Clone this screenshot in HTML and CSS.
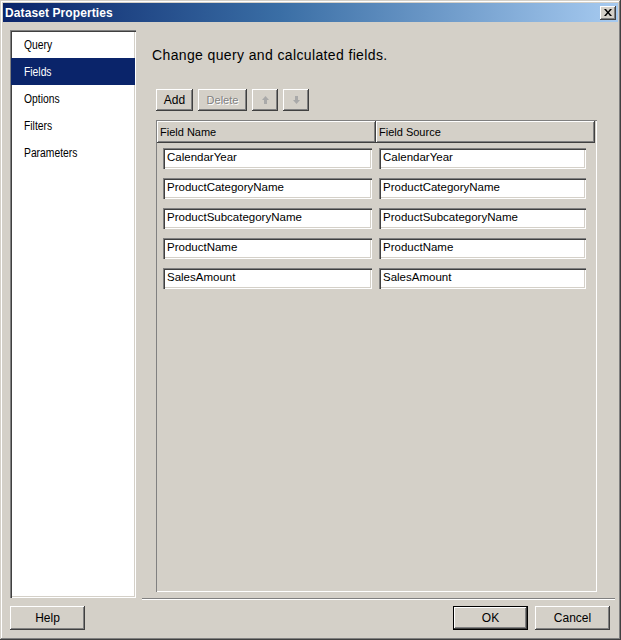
FILE: index.html
```html
<!DOCTYPE html>
<html>
<head>
<meta charset="utf-8">
<title>Dataset Properties</title>
<link rel="stylesheet" href="styles.css">
</head>
<body>
<div class="window">
  <div class="titlebar">
    <span class="title">Dataset Properties</span>
    <span class="close"><svg width="8" height="7" viewBox="0 0 8 7"><path d="M0 0h2l2 2.5L6 0h2L5 3.5 8 7H6L4 4.5 2 7H0l3-3.5z" fill="#000"/></svg></span>
  </div>
  <div class="main">
    <ul class="nav">
      <li><span>Query</span></li>
      <li class="active"><span>Fields</span></li>
      <li><span>Options</span></li>
      <li><span>Filters</span></li>
      <li><span>Parameters</span></li>
    </ul>
    <div class="content">
      <h1 class="heading">Change query and calculated fields.</h1>
      <div class="toolbar">
        <button class="btn btn-add">Add</button>
        <button class="btn btn-delete disabled">Delete</button>
        <button class="btn btn-arrow disabled"><svg width="7" height="8" viewBox="0 0 7 8"><path d="M3.5 0L7 4H5v4H2V4H0z" fill="#a9a9a9"/></svg></button>
        <button class="btn btn-arrow disabled"><svg width="7" height="8" viewBox="0 0 7 8"><path d="M3.5 8L7 4H5V0H2v4H0z" fill="#a9a9a9"/></svg></button>
      </div>
      <div class="grid">
        <div class="grid-head">
          <div class="hcell">Field Name</div>
          <div class="hcell">Field Source</div>
        </div>
        <div class="grid-row"><div class="cell c1"><div class="field">CalendarYear</div></div><div class="cell c2"><div class="field">CalendarYear</div></div></div>
        <div class="grid-row"><div class="cell c1"><div class="field">ProductCategoryName</div></div><div class="cell c2"><div class="field">ProductCategoryName</div></div></div>
        <div class="grid-row"><div class="cell c1"><div class="field">ProductSubcategoryName</div></div><div class="cell c2"><div class="field">ProductSubcategoryName</div></div></div>
        <div class="grid-row"><div class="cell c1"><div class="field">ProductName</div></div><div class="cell c2"><div class="field">ProductName</div></div></div>
        <div class="grid-row"><div class="cell c1"><div class="field">SalesAmount</div></div><div class="cell c2"><div class="field">SalesAmount</div></div></div>
      </div>
    </div>
  </div>
  <div class="footer">
    <div class="separator"></div>
    <div class="buttons">
      <button class="btn btn-dlg">Help</button>
      <div class="spacer"></div>
      <button class="btn btn-dlg default">OK</button>
      <button class="btn btn-dlg">Cancel</button>
    </div>
  </div>
</div>
</body>
</html>
```
FILE: styles.css
```css
* { box-sizing: border-box; }
html, body { margin: 0; padding: 0; background: #d4d0c8; }
body { font-family: "Liberation Sans", Arial, sans-serif; font-size: 11px; color: #000; }

.window {
  width: 621px;
  height: 640px;
  padding: 3px;
  background: #d4d0c8;
  display: flex;
  flex-direction: column;
  box-shadow: inset -1px -1px #404040, inset 1px 1px #d4d0c8, inset -2px -2px #808080, inset 2px 2px #ffffff;
}

.titlebar {
  height: 19px;
  flex: none;
  background: linear-gradient(to right, #0a246a 0%, #3a6ea5 45%, #a6caf0 100%);
  color: #fff;
  display: flex;
  align-items: center;
  justify-content: space-between;
  padding: 0 2px 0 2px;
}
.title { font-weight: bold; font-size: 12px; letter-spacing: 0.1px; }
.close {
  width: 16px;
  height: 14px;
  background: #d4d0c8;
  display: flex;
  align-items: center;
  justify-content: center;
  box-shadow: inset -1px -1px #404040, inset 1px 1px #ffffff, inset -2px -2px #808080;
}

.main {
  display: flex;
  height: 576px;
  padding: 8px 0 0 7px;
  flex: none;
}

.nav {
  list-style: none;
  margin: 0;
  padding: 1px 1px 0 1px;
  width: 126px;
  height: 568px;
  background: #fff;
  box-shadow: inset 1px 1px #808080, inset 2px 2px #404040, inset -1px -1px #ffffff, inset -2px -2px #d4d0c8;
  font-size: 12px;
}
.nav li {
  height: 27px;
  line-height: 27px;
  padding-top: 1px;
  padding-left: 13px;
}
.nav li span {
  display: inline-block;
  transform: scaleX(0.86);
  transform-origin: left center;
}
.nav li.active { background: #0a246a; color: #fff; }

.content {
  flex: 1;
  display: flex;
  flex-direction: column;
  padding: 17px 21px 6px 20px;
}

.heading {
  margin: 0 0 0 -4px;
  font-weight: normal;
  font-size: 14px;
  letter-spacing: 0.37px;
  line-height: 17px;
}

.toolbar {
  display: flex;
  gap: 5px;
  margin-top: 25px;
  height: 22px;
}

.btn {
  font-family: "Liberation Sans", Arial, sans-serif;
  font-size: 11px;
  color: #000;
  background: #d4d0c8;
  border: none;
  padding: 0;
  display: flex;
  align-items: center;
  justify-content: center;
  box-shadow: inset -1px -1px #404040, inset 1px 1px #ffffff, inset -2px -2px #808080;
}
.btn.disabled { color: #808080; text-shadow: 1px 1px #ffffff; }
.btn-add { width: 37px; height: 22px; font-size: 12px; }
.btn-delete { width: 49px; height: 22px; }
.btn-arrow { width: 26px; height: 22px; }

.grid {
  margin-top: 9px;
  flex: 1;
  box-shadow: inset 1px 1px #808080, inset -1px -1px #ffffff;
  padding: 1px;
}
.grid-head {
  display: grid;
  grid-template-columns: 219px 219px;
  height: 22px;
}
.hcell {
  padding-left: 3px;
  line-height: 22px;
  box-shadow: inset -1px -1px #404040, inset 1px 1px #ffffff, inset -2px -2px #808080;
}
.grid-row {
  display: grid;
  grid-template-columns: 219px 219px;
}
.cell { padding-top: 5px; padding-bottom: 4px; }
.c1 { padding-left: 6px; padding-right: 4px; }
.c2 { padding-left: 3px; padding-right: 9px; }
.field {
  height: 21px;
  line-height: 19px;
  background: #fff;
  padding-left: 4px;
  font-size: 11.5px;
  box-shadow: inset 1px 1px #808080, inset 2px 2px #404040, inset -1px -1px #ffffff, inset -2px -2px #d4d0c8;
}

.footer {
  flex: 1;
  display: flex;
  flex-direction: column;
}
.separator {
  margin-left: 139px;
  margin-right: 3px;
  height: 2px;
  border-top: 1px solid #808080;
  border-bottom: 1px solid #ffffff;
}
.buttons {
  display: flex;
  gap: 7px;
  margin-top: 6px;
  padding: 0 8px 0 7px;
}
.spacer { flex: 1; }
.btn-dlg { width: 75px; height: 24px; font-size: 12px; }
.btn-dlg.default {
  box-shadow: inset 0 0 0 1px #000, inset -2px -2px #404040, inset 2px 2px #ffffff, inset -3px -3px #808080;
}
```
